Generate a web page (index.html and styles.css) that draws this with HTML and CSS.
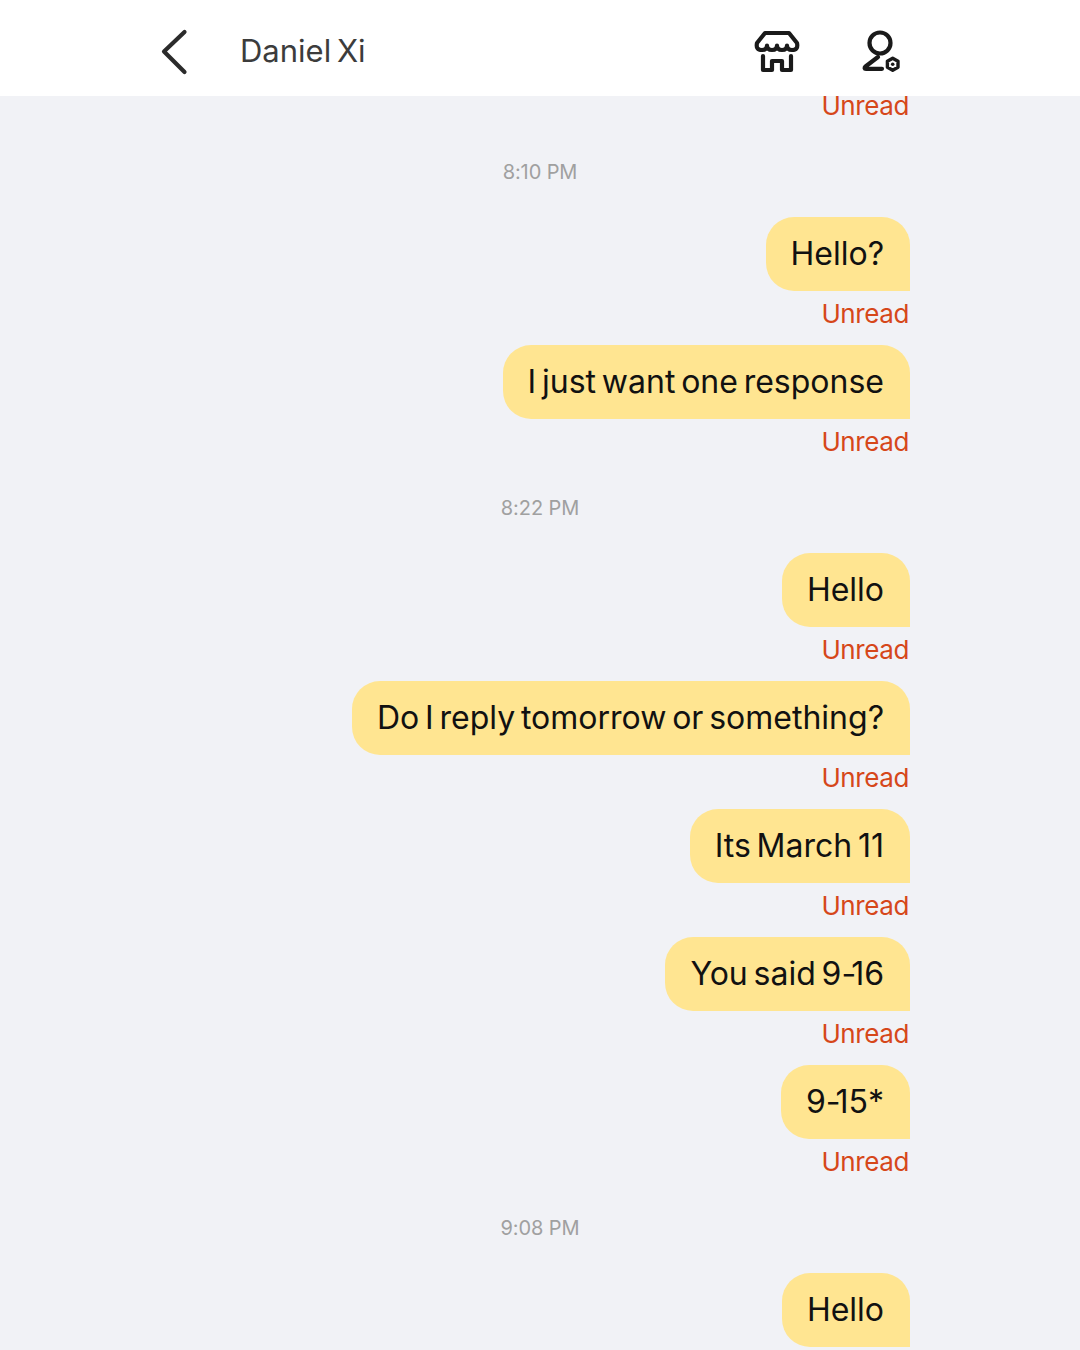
FILE: index.html
```html
<!DOCTYPE html>
<html lang="en">
  <head>
    <meta charset="UTF-8" />
    <meta name="viewport" content="width=device-width, initial-scale=1.0" />
    <link rel="stylesheet" href="styles.css">
    <title>Daniel Xi</title>
  </head>

  <body>
    <div class="screen">
      <header class="topbar">
        <svg class="back" width="30" height="48" viewBox="0 0 30 48" fill="none">
          <path d="M24.5 4 L4 23.5 L24.5 44" />
        </svg>
        <div class="name">Daniel Xi</div>
        <div class="icons">
          <svg class="store" width="48" height="46" viewBox="0 0 48 46" fill="none">
            <path d="M12 5 H36 L44 15 Q45.5 22 39 22 Q34 22 34 17.5 Q34 22 29 22 Q24 22 24 17.5 Q24 22 19 22 Q14 22 14 17.5 Q14 22 9 22 Q2.5 22 4 15 Z" />
            <path d="M10 28 V42 H19 V33 H29 V42 H38 V28" />
          </svg>
          <svg class="person" width="44" height="46" viewBox="0 0 44 46" fill="none">
            <circle cx="20" cy="15" r="10.5" />
            <path d="M18 29 L5.5 38.5 Q3.5 40.8 6 40.8 H22" />
            <path class="hex" d="M32.7 30.3 L38 33.3 V39.3 L32.7 42.3 L27.4 39.3 V33.3 Z" />
            <circle class="dot" cx="32.7" cy="36.3" r="1.8" />
          </svg>
        </div>
      </header>

      <main class="chat">
        <div class="unread first">Unread</div>

        <div class="time">8:10 PM</div>
        <div class="bubble">Hello?</div>
        <div class="unread">Unread</div>
        <div class="bubble">I just want one response</div>
        <div class="unread">Unread</div>

        <div class="time">8:22 PM</div>
        <div class="bubble">Hello</div>
        <div class="unread">Unread</div>
        <div class="bubble">Do I reply tomorrow or something?</div>
        <div class="unread">Unread</div>
        <div class="bubble">Its March 11</div>
        <div class="unread">Unread</div>
        <div class="bubble">You said 9<span class="dash">-</span>16</div>
        <div class="unread">Unread</div>
        <div class="bubble">9<span class="dash">-</span>15*</div>
        <div class="unread">Unread</div>

        <div class="time">9:08 PM</div>
        <div class="bubble">Hello</div>
      </main>
    </div>
  </body>
</html>
```

FILE: styles.css
```css
html,
body {
  margin: 0;
  height: 100%;
}

body {
  font-family: Inter, "Liberation Sans", sans-serif;
  background-color: #f1f2f6;
  overflow: hidden;
}

.screen {
  height: 1350px;
  display: flex;
  flex-direction: column;
  overflow: hidden;
}

.topbar {
  flex: none;
  height: 96px;
  background-color: #fff;
  display: flex;
  align-items: center;
  padding: 0 176px 0 160px;
  position: relative;
  z-index: 1;
}

.back {
  stroke: #2b2b2b;
  stroke-width: 4.2;
  stroke-linecap: round;
  stroke-linejoin: round;
  margin-top: 8px;
}

.name {
  margin-left: 50px;
  font-size: 31px;
  word-spacing: -3px;
  color: #3c3c3c;
  margin-top: 5px;
}

.icons {
  margin-left: auto;
  display: flex;
  align-items: center;
  gap: 59px;
  margin-top: 6px;
}

.store,
.person {
  stroke: #1a1a1a;
  stroke-width: 4.2;
  stroke-linecap: round;
  stroke-linejoin: round;
}

.person .hex {
  stroke-width: 3.4;
}

.person .dot {
  fill: #1a1a1a;
  stroke: none;
}

.chat {
  flex: 1;
  display: flex;
  flex-direction: column;
  align-items: flex-end;
  padding-right: 170px;
}

.bubble {
  height: 74px;
  line-height: 74px;
  padding: 0 26px 0 25px;
  background-color: #ffe591;
  border-radius: 28px 28px 0 28px;
  font-size: 32px;
  word-spacing: -3.2px;
  color: #111;
  white-space: nowrap;
  flex: none;
}

.dash {
  letter-spacing: -5px;
}

.unread {
  height: 45px;
  padding: 9px 1px 0 0;
  line-height: 28px;
  font-size: 26px;
  letter-spacing: -0.4px;
  color: #d6471a;
  flex: none;
}

.unread.first {
  margin-top: -13px;
}

.time {
  align-self: stretch;
  margin-right: -170px;
  height: 80px;
  padding-top: 23px;
  box-sizing: border-box;
  line-height: 24px;
  text-align: center;
  font-size: 20px;
  letter-spacing: -0.1px;
  color: #a0a0a0;
  flex: none;
}
```
